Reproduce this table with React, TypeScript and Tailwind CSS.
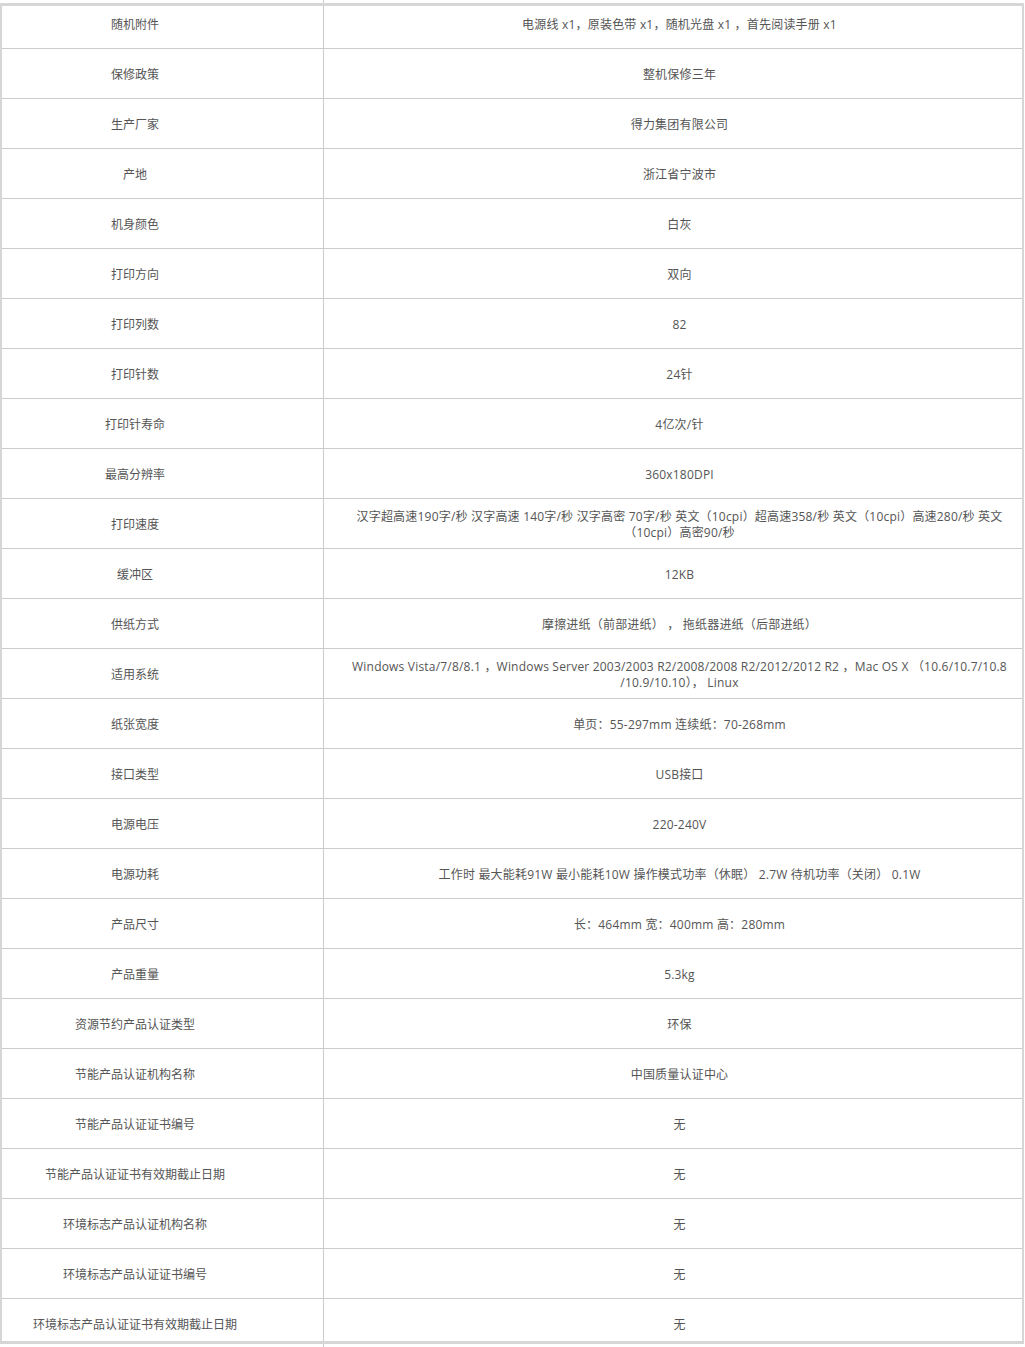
const specs: { label: string; value: React.ReactNode }[] = [
  { label: '随机附件', value: '电源线 x1，原装色带 x1，随机光盘 x1 ，首先阅读手册 x1' },
  { label: '保修政策', value: '整机保修三年' },
  { label: '生产厂家', value: '得力集团有限公司' },
  { label: '产地', value: '浙江省宁波市' },
  { label: '机身颜色', value: '白灰' },
  { label: '打印方向', value: '双向' },
  { label: '打印列数', value: '82' },
  { label: '打印针数', value: '24针' },
  { label: '打印针寿命', value: '4亿次/针' },
  { label: '最高分辨率', value: '360x180DPI' },
  {
    label: '打印速度',
    value: (
      <>
        汉字超高速190字/秒 汉字高速 140字/秒 汉字高密 70字/秒 英文（10cpi）超高速358/秒 英文（10cpi）高速280/秒 英文
        <br />
        （10cpi）高密90/秒
      </>
    ),
  },
  { label: '缓冲区', value: '12KB' },
  { label: '供纸方式', value: '摩擦进纸（前部进纸） ， 拖纸器进纸（后部进纸）' },
  {
    label: '适用系统',
    value: (
      <>
        Windows Vista/7/8/8.1 ，Windows Server 2003/2003 R2/2008/2008 R2/2012/2012 R2 ，Mac OS X （10.6/10.7/10.8
        <br />
        /10.9/10.10）， Linux
      </>
    ),
  },
  { label: '纸张宽度', value: '单页：55-297mm 连续纸：70-268mm' },
  { label: '接口类型', value: 'USB接口' },
  { label: '电源电压', value: '220-240V' },
  { label: '电源功耗', value: '工作时 最大能耗91W 最小能耗10W 操作模式功率（休眠） 2.7W 待机功率（关闭） 0.1W' },
  { label: '产品尺寸', value: '长：464mm 宽：400mm 高：280mm' },
  { label: '产品重量', value: '5.3kg' },
  { label: '资源节约产品认证类型', value: '环保' },
  { label: '节能产品认证机构名称', value: '中国质量认证中心' },
  { label: '节能产品认证证书编号', value: '无' },
  { label: '节能产品认证证书有效期截止日期', value: '无' },
  { label: '环境标志产品认证机构名称', value: '无' },
  { label: '环境标志产品认证证书编号', value: '无' },
  { label: '环境标志产品认证证书有效期截止日期', value: '无' },
]

export default function App() {
  const last = specs.length - 1

  return (
    <div className="w-[1025px] bg-white font-['Open_Sans','Noto_Sans_CJK_SC',sans-serif] text-[12px] leading-4 text-[#555]">
      <div className="ml-[323px] h-[3px] w-px bg-[#ccc]" />
      <table className="w-[1024px] table-fixed border-separate border-spacing-0 border-t-[3px] border-b-[3px] border-l-2 border-r-2 border-[#d6d6d6]">
        <colgroup>
          <col className="w-[322px]" />
          <col />
        </colgroup>
        <tbody>
          {specs.map((row, i) => {
            const first = i === 0
            const end = i === last
            const rowCls = first
              ? 'h-[43px] pb-[4px] border-b'
              : end
                ? 'h-[42px] pt-[10px]'
                : 'h-[50px] pt-[2px] border-b'
            return (
              <tr key={row.label}>
                <td className={`${rowCls} border-r border-[#ccc] pr-[55px] text-center align-middle`}>
                  {row.label}
                </td>
                <td className={`${rowCls} border-[#ccc] pl-[24px] pr-[11px] text-center align-middle tracking-[0.2px]`}>
                  {row.value}
                </td>
              </tr>
            )
          })}
        </tbody>
      </table>
      <div className="ml-[323px] h-[3px] w-px bg-[#ccc]" />
    </div>
  )
}
